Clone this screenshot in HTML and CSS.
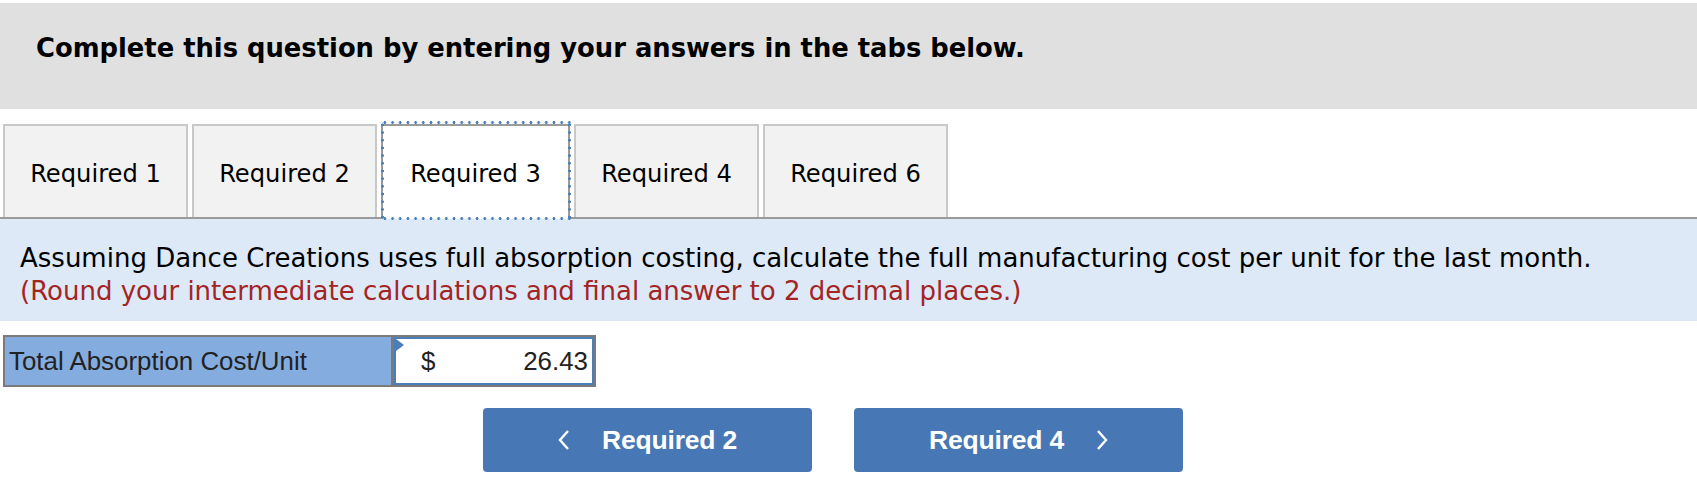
FILE: index.html
```html
<!DOCTYPE html>
<html lang="en">
<head>
<meta charset="utf-8">
<title>Required 3</title>
<link rel="stylesheet" href="styles.css">
</head>
<body>
<div class="header">Complete this question by entering your answers in the tabs below.</div>

<div class="tabs">
  <div class="tab">Required 1</div>
  <div class="tab">Required 2</div>
  <div class="tab active">Required 3</div>
  <div class="tab">Required 4</div>
  <div class="tab">Required 6</div>
</div>

<div class="panel">
  <p class="q">Assuming Dance Creations uses full absorption costing, calculate the full manufacturing cost per unit for the last month.</p>
  <p class="note">(Round your intermediate calculations and final answer to 2 decimal places.)</p>
</div>

<div class="answer">
  <div class="label">Total Absorption Cost/Unit</div>
  <div class="value"><span class="flag"></span><span class="cur">$</span><span class="num">26.43</span></div>
</div>

<div class="nav">
  <div class="btn"><svg class="chev" width="12" height="22" viewBox="0 0 12 22"><polyline points="10,2 2,11 10,20" fill="none" stroke="#fff" stroke-width="2.4"/></svg><span>Required 2</span></div>
  <div class="btn"><span>Required 4</span><svg class="chev" width="12" height="22" viewBox="0 0 12 22"><polyline points="2,2 10,11 2,20" fill="none" stroke="#fff" stroke-width="2.4"/></svg></div>
</div>
</body>
</html>
```

FILE: styles.css
```css
html, body {
  margin: 0;
  padding: 0;
  background: #fff;
}

body {
  font-family: "DejaVu Sans", Verdana, sans-serif;
  color: #000;
}

.header {
  margin-top: 3px;
  height: 106px;
  box-sizing: border-box;
  padding: 30px 0 0 36px;
  background: #e0e0e0;
  font-weight: bold;
  font-size: 25.8px;
  line-height: 30px;
}

.tabs {
  display: flex;
  gap: 4px;
  margin-top: 15px;
  padding-left: 3px;
  border-bottom: 2px solid #9a9a9a;
}

.tab {
  position: relative;
  width: 185px;
  height: 93px;
  box-sizing: border-box;
  border: 2px solid #c8c8c8;
  border-bottom: none;
  background: #f2f2f2;
  display: flex;
  align-items: center;
  justify-content: center;
  font-size: 24.2px;
  padding-top: 4px;
}

.tab.active {
  background: #fff;
  border-color: #9a9a9a;
  margin-bottom: -2px;
  height: 95px;
  width: 189px;
  padding-bottom: 2px;
}

.tab.active::before {
  content: "";
  position: absolute;
  top: -5px;
  left: -2px;
  right: -3px;
  bottom: -1px;
  background:
    radial-gradient(circle, #4a7ebb 1.2px, transparent 1.7px) 0 0 / 7.7px 3px repeat-x,
    radial-gradient(circle, #4a7ebb 1.2px, transparent 1.7px) 0 100% / 7.7px 3px repeat-x,
    radial-gradient(circle, #4a7ebb 1.2px, transparent 1.7px) 0 0 / 3px 7.7px repeat-y,
    radial-gradient(circle, #4a7ebb 1.2px, transparent 1.7px) 100% 0 / 3px 7.7px repeat-y;
}

.panel {
  background: #dde9f6;
  padding: 23px 20px 13px;
  font-size: 26px;
  line-height: 33px;
}

.panel p {
  margin: 0;
}

.note {
  color: #a42424;
}

.answer {
  display: inline-flex;
  margin: 14px 0 0 3px;
  border: 2px solid #7a7a7a;
  font-family: "Liberation Sans", Arial, sans-serif;
  font-size: 25.9px;
  color: #222;
}

.label {
  width: 389px;
  height: 48px;
  box-sizing: border-box;
  padding-left: 4px;
  background: #84acdf;
  border-right: 3px solid #7a7a7a;
  display: flex;
  align-items: center;
}

.value {
  position: relative;
  width: 200px;
  height: 48px;
  box-sizing: border-box;
  border: 2px solid #4a7ebb;
  background: #fff;
  display: flex;
  align-items: center;
  justify-content: space-between;
  padding: 0 4px 0 25px;
}

.flag {
  position: absolute;
  top: 0;
  left: 0;
  width: 0;
  height: 0;
  border-left: 8px solid #4a7ebb;
  border-top: 6px solid transparent;
  border-bottom: 6px solid transparent;
}

.nav {
  display: flex;
  gap: 42px;
  margin-top: 21px;
  padding-left: 483px;
}

.btn {
  width: 329px;
  height: 64px;
  border-radius: 4px;
  background: #4777b5;
  color: #fff;
  font-family: "Liberation Sans", Arial, sans-serif;
  font-weight: bold;
  font-size: 26.5px;
  letter-spacing: -0.2px;
  display: flex;
  align-items: center;
  justify-content: center;
  gap: 32px;
}

.chev {
  display: block;
}
```
